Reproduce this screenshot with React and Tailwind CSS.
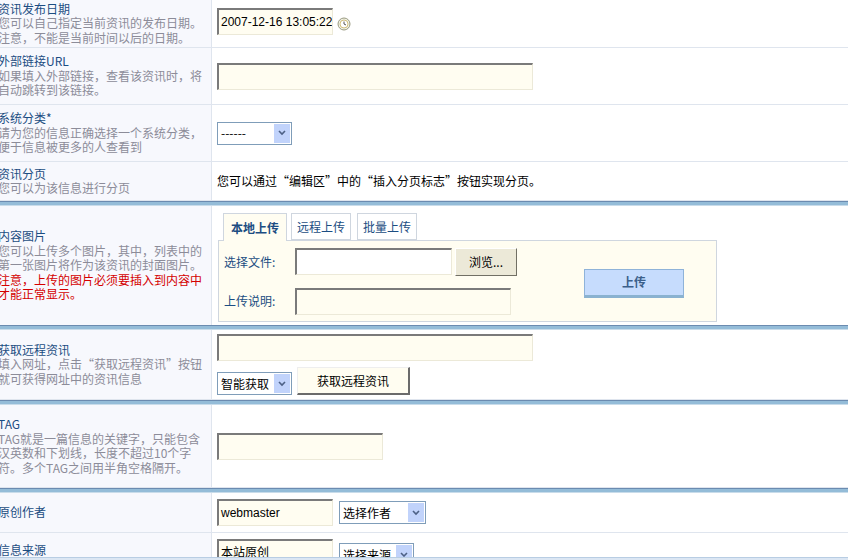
import React from "react";

const font = { fontFamily: '"Noto Sans CJK SC", "Liberation Sans", sans-serif' };

const Input = ({ w, h = "h-[27px]", value, className = "" }) => (
  <div
    className={`${w} ${h} shrink-0 bg-[#fffdf1] border border-[#ece9d8] border-t-[#7a7a7a] border-l-[#7a7a7a] border-t-2 border-l-2 flex items-center px-[2px] text-[12px] text-black whitespace-nowrap overflow-hidden ${className}`}
    style={{ fontFamily: '"Liberation Sans", "Noto Sans CJK SC", sans-serif' }}
  >
    {value}
  </div>
);

const Select = ({ w, label }) => (
  <div className={`${w} h-[23px] border border-[#7f9db9] bg-white flex items-center justify-between text-[12px] whitespace-nowrap`}>
    <span className="pl-[3px]">{label}</span>
    <span className="w-[16px] h-[19px] mr-[1px] bg-[#c1d3fb] flex items-center justify-center">
      <svg width="8" height="6" viewBox="0 0 8 6"><path d="M1 1 L4 4 L7 1" stroke="#4d6185" strokeWidth="1.6" fill="none" /></svg>
    </span>
  </div>
);

const Label = ({ title, desc, red }) => (
  <div className="-ml-[2px] text-[12px] leading-[14.5px] whitespace-nowrap">
    <div className="text-[#1c4d82]">{title}</div>
    {desc && <div className="text-[#8c8c99]">{desc}</div>}
    {red && <div className="text-[#d40000]">{red}</div>}
  </div>
);

const Row = ({ h, left, children, leftAlign = "items-center", rightClass = "" }) => (
  <div className={`flex ${h} border-b border-[#dfe5ee]`}>
    <div className={`w-[212px] shrink-0 bg-[#f7f8fd] border-r border-[#dfe5ee] flex ${leftAlign} overflow-hidden`}>{left}</div>
    <div className={`flex-1 pl-[5px] ${rightClass}`}>{children}</div>
  </div>
);

const Sep = () => (
  <div className="h-[5px] border-t border-[#6b8bb0] bg-[#94bcd8] border-b border-b-[#c9dcea]" />
);

export default function App() {
  return (
    <div className="w-[848px] h-[560px] overflow-hidden bg-white" style={font}>
      <Row h="h-[48px]" left={<Label title="资讯发布日期" desc={<>您可以自己指定当前资讯的发布日期。<br />注意，不能是当前时间以后的日期。</>} />} rightClass="flex items-center gap-[4px] -mt-[4px]">
        <Input w="w-[116px]" value="2007-12-16 13:05:22" />
        <svg width="14" height="14" viewBox="0 0 14 14" className="mt-[4px]">
          <circle cx="7" cy="7" r="6" fill="#eef0e6" stroke="#9a9a80" />
          <circle cx="7" cy="7" r="4" fill="#fff" stroke="#c8b060" strokeWidth="0.8" />
          <path d="M7 4.5 V7 L9 8" stroke="#555" strokeWidth="1" fill="none" />
        </svg>
      </Row>
      <Row h="h-[57px]" left={<Label title="外部链接URL" desc={<>如果填入外部链接，查看该资讯时，将<br />自动跳转到该链接。</>} />} rightClass="flex items-center">
        <Input w="w-[316px]" />
      </Row>
      <Row h="h-[57px]" left={<Label title="系统分类*" desc={<>请为您的信息正确选择一个系统分类，<br />便于信息被更多的人查看到</>} />} rightClass="flex items-center">
        <Select w="w-[75px]" label="------" />
      </Row>
      <Row h="h-[39px]" left={<Label title="资讯分页" desc="您可以为该信息进行分页" />} rightClass="flex items-center text-[12px]">
        您可以通过“编辑区”中的“插入分页标志”按钮实现分页。
      </Row>
      <Sep />
      <div className="flex h-[119px]">
        <div className="w-[212px] shrink-0 bg-[#f7f8fd] border-r border-[#dfe5ee] flex items-center overflow-hidden">
          <Label title="内容图片" desc={<>您可以上传多个图片，其中，列表中的<br />第一张图片将作为该资讯的封面图片。</>} red={<>注意，上传的图片必须要插入到内容中<br />才能正常显示。</>} />
        </div>
        <div className="pl-[6px] pt-[7px]">
          <div className="flex gap-[4px] pl-[5px] text-[12px] text-[#1c4d82]">
            <div className="w-[64px] h-[28px] border border-[#cfd6df] border-b-0 bg-[#fffdf1] flex items-center justify-center font-bold relative z-10">本地上传</div>
            <div className="w-[60px] h-[27px] border border-[#cfd6df] flex items-center justify-center">远程上传</div>
            <div className="w-[60px] h-[27px] border border-[#cfd6df] flex items-center justify-center ml-[2px]">批量上传</div>
          </div>
          <div className="w-[499px] h-[82px] -mt-px border border-[#cfd6df] bg-[#fffdf1] flex items-center text-[12px] text-[#1c4d82]">
            <div className="pl-[5px] flex flex-col gap-[12px]">
              <div className="flex items-center">
                <span className="w-[71px]">选择文件:</span>
                <Input w="w-[157px]" className="bg-white" />
                <div className="ml-[3px] w-[62px] h-[28px] bg-[#ece9d8] border border-[#fff] border-r-[#716f64] border-b-[#716f64] flex items-center justify-center text-black">浏览...</div>
              </div>
              <div className="flex items-center">
                <span className="w-[71px]">上传说明:</span>
                <Input w="w-[216px]" />
              </div>
            </div>
            <div className="ml-[67px] mt-[4px] w-[100px] h-[29px] bg-[#c6dcfd] border border-[#8fb3d9] border-b-[3px] border-b-[#8ab2d0] flex items-center justify-center text-[#3b5f8a] font-bold">上传</div>
          </div>
        </div>
      </div>
      <Sep />
      <Row h="h-[70px]" left={<Label title="获取远程资讯" desc={<>填入网址，点击“获取远程资讯”按钮<br />就可获得网址中的资讯信息</>} />} rightClass="flex flex-col justify-center gap-[6px]">
        <Input w="w-[316px]" />
        <div className="flex items-end gap-[5px]">
          <Select w="w-[75px]" label="智能获取" />
          <div className="w-[113px] h-[28px] bg-[#fffdf1] border border-[#eee] border-r-[#6b6b6b] border-b-[#6b6b6b] border-r-2 border-b-2 flex items-center justify-center text-[12px]">获取远程资讯</div>
        </div>
      </Row>
      <Sep />
      <Row h="h-[83px]" left={<Label title="TAG" desc={<>TAG就是一篇信息的关键字，只能包含<br />汉英数和下划线，长度不超过10个字<br />符。多个TAG之间用半角空格隔开。</>} />} rightClass="flex items-center">
        <Input w="w-[166px]" />
      </Row>
      <Sep />
      <Row h="h-[40px]" left={<Label title="原创作者" />} rightClass="flex items-center gap-[6px]">
        <Input w="w-[116px]" value="webmaster" />
        <Select w="w-[87px]" label="选择作者" />
      </Row>
      <div className="flex h-[24px] overflow-hidden">
        <div className="w-[212px] shrink-0 bg-[#f7f8fd] border-r border-[#dfe5ee] pt-[10px]"><Label title="信息来源" /></div>
        <div className="pl-[5px] pt-[6px] flex gap-[6px] items-start">
          <Input w="w-[116px]" value="本站原创" />
          <div className="mt-[4px]"><Select w="w-[75px]" label="选择来源" /></div>
        </div>
      </div>
      <div className="h-[10px] bg-[#dbe6f3] border-t border-[#b8cde3]" />
    </div>
  );
}
